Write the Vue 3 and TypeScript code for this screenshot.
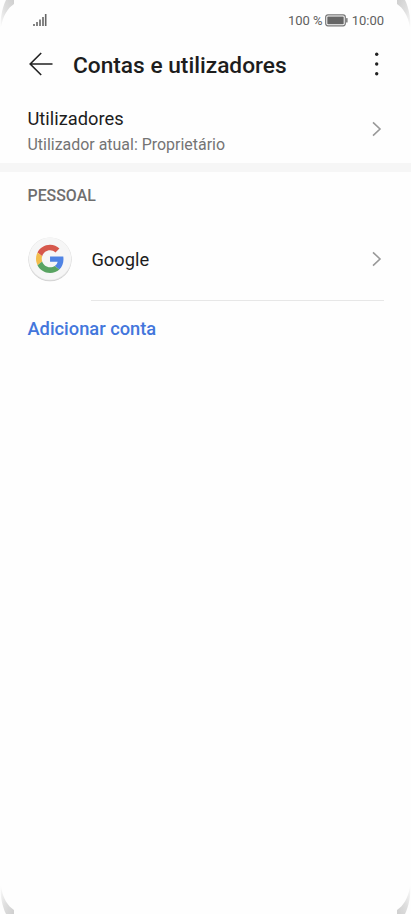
<script setup lang="ts">
interface Row {
  id: string
  title: string
  subtitle?: string
}

const users: Row = {
  id: 'users',
  title: 'Utilizadores',
  subtitle: 'Utilizador atual: Proprietário',
}
const account: Row = { id: 'google', title: 'Google' }
const corners: string[] = ['top-left', 'top-right', 'bottom-left', 'bottom-right']
</script>

<template>
  <main class="screen">
    <svg
      v-for="corner in corners"
      :key="corner"
      class="corner"
      :class="corner"
      viewBox="0 0 15 29"
      aria-hidden="true"
    >
      <defs>
        <linearGradient :id="'shade-' + corner" x1="1" y1="0" x2="0" y2="1">
          <stop offset="0" stop-color="#cfcfcf" />
          <stop offset="0.5" stop-color="#dfdfdf" />
          <stop offset="1" stop-color="#fbfbfb" />
        </linearGradient>
      </defs>
      <path d="M6 0H14V4C8 8 3 15 .8 28C0 18 2.500 7 6 0Z" :fill="`url(#shade-${corner})`" />
    </svg>

    <header class="status">
      <svg class="signal" viewBox="0 0 14 12" aria-hidden="true">
        <path d="M1 10V12M4 8V12M7 5.500V12M10 3V12M12.700 0V12" />
      </svg>
      <div class="status-right">
        <span class="percent">100 %</span>
        <svg class="battery" viewBox="0 0 24 13" aria-hidden="true">
          <rect class="shell" x=".7" y=".8" width="19.600" height="11" rx="2.200" />
          <rect class="charge" x="2.300" y="2.400" width="16.400" height="7.800" rx=".6" />
          <rect class="charge" x="21.200" y="4" width="1.300" height="4.600" rx=".6" />
        </svg>
        <span class="clock">10:00</span>
      </div>
    </header>

    <nav class="toolbar">
      <svg class="back" viewBox="0 0 24 24" aria-hidden="true">
        <path d="M12.200 1L1.200 12L12.200 23M1.200 12H23.500" />
      </svg>
      <h1 class="heading">Contas e utilizadores</h1>
      <svg class="more" viewBox="0 0 6 24" aria-hidden="true">
        <circle cx="2.700" cy="2.300" r="1.700" />
        <circle cx="2.700" cy="12" r="1.700" />
        <circle cx="2.700" cy="21.700" r="1.700" />
      </svg>
    </nav>

    <section class="users">
      <div class="labels">
        <span class="title">{{ users.title }}</span>
        <span class="subtitle">{{ users.subtitle }}</span>
      </div>
      <svg class="chevron" viewBox="0 0 10 16" aria-hidden="true">
        <path d="M1 1.300L8 8L1 14.700" />
      </svg>
    </section>

    <div class="band"></div>

    <h2 class="section">PESSOAL</h2>

    <section class="account">
      <svg class="google" viewBox="0 0 46 46" aria-hidden="true">
        <circle cx="23" cy="23.800" r="21.500" fill="#cfcfcf" />
        <circle cx="23" cy="23" r="21.600" fill="#e3e3e3" />
        <circle cx="23" cy="22.700" r="21.100" fill="#f6f6f6" />
        <g transform="translate(9 8.800) scale(.585)">
          <path fill="#d6584c" d="M24 9.500c3.540 0 6.710 1.220 9.210 3.600l6.850-6.850C35.900 2.380 30.470 0 24 0 14.620 0 6.510 5.380 2.560 13.220l7.980 6.190C12.430 13.720 17.740 9.500 24 9.500z" />
          <path fill="#4f83e4" d="M46.980 24.550c0-1.570-.15-3.090-.38-4.550H24v9.020h12.940c-.58 2.960-2.260 5.480-4.780 7.180l7.730 6c4.510-4.180 7.090-10.360 7.090-17.650z" />
          <path fill="#f3bd4c" d="M10.530 28.590c-.48-1.450-.76-2.990-.76-4.590s.27-3.140.76-4.590l-7.980-6.190C.92 16.460 0 20.120 0 24s.92 7.540 2.560 10.780l7.970-6.190z" />
          <path fill="#58a361" d="M24 48c6.480 0 11.930-2.130 15.890-5.810l-7.730-6c-2.150 1.450-4.920 2.300-8.160 2.300-6.260 0-11.570-4.220-13.470-9.910l-7.980 6.190C6.510 42.620 14.620 48 24 48z" />
        </g>
      </svg>
      <div class="account-body">
        <span class="title account-name">{{ account.title }}</span>
        <svg class="chevron" viewBox="0 0 10 16" aria-hidden="true">
          <path d="M1 1.300L8 8L1 14.700" />
        </svg>
      </div>
    </section>

    <a class="add">Adicionar conta</a>
  </main>
</template>

<style>
body {
  background: #fefefe;
}
</style>

<style scoped>
.screen {
  position: relative;
  box-sizing: border-box;
  width: 100%;
  height: 914px;
  overflow: hidden;
  background: #fefefe;
  color: #1d1d1d;
  font-family: Roboto, "Liberation Sans", sans-serif;
  display: flex;
  flex-direction: column;
}
svg {
  display: block;
  flex: none;
}
.corner {
  position: absolute;
  width: 15px;
  height: 29px;
}
.top-left { top: 0; left: 0; }
.top-right { top: 0; right: 0; transform: scaleX(-1); }
.bottom-left { bottom: 0; left: 0; transform: scaleY(-1); }
.bottom-right { bottom: 0; right: 0; transform: scale(-1); }
.status {
  height: 40px;
  padding: 0 27px 0 33px;
  display: flex;
  align-items: center;
  justify-content: space-between;
  box-sizing: border-box;
  color: #606060;
  font-size: 13px;
}
.signal {
  width: 14px;
  height: 12px;
  fill: none;
  stroke: #666;
  stroke-width: 1.6;
}
.status-right {
  display: flex;
  align-items: center;
}
.percent { margin-right: 2px; }
.battery {
  width: 24px;
  height: 13px;
  margin-right: 3px;
}
.shell {
  fill: none;
  stroke: #777;
  stroke-width: 1.2;
}
.charge { fill: #666; }
.toolbar {
  height: 48px;
  padding: 0 31px 0 29px;
  display: flex;
  align-items: center;
  box-sizing: border-box;
}
.back {
  width: 24px;
  height: 24px;
  fill: none;
  stroke: #222;
  stroke-width: 1.6;
}
.heading {
  flex: 1;
  margin: 0 0 0 20px;
  padding-top: 4px;
  font-size: 22.7px;
  line-height: 30px;
  font-weight: 500;
  white-space: nowrap;
}
.more {
  width: 6px;
  height: 24px;
  fill: #222;
}
.users {
  height: 75px;
  padding: 19px 29px 0 27.5px;
  display: flex;
  justify-content: space-between;
  box-sizing: border-box;
}
.labels {
  display: flex;
  flex-direction: column;
}
.title {
  font-size: 18.3px;
  line-height: 24px;
}
.subtitle {
  margin-top: 3px;
  color: #747474;
  font-size: 15.95px;
  line-height: 22px;
}
.chevron {
  width: 10px;
  height: 16px;
  fill: none;
  stroke: #999;
  stroke-width: 1.6;
}
.users .chevron { margin-top: 14px; }
.band {
  height: 9px;
  background: #f6f6f6;
}
.section {
  margin: 13px 27.5px 0;
  color: #6e6e6e;
  font-size: 15.9px;
  line-height: 22px;
  font-weight: 500;
}
.account {
  height: 94px;
  padding: 0 27px;
  display: flex;
  align-items: flex-start;
  box-sizing: border-box;
}
.google {
  width: 46px;
  height: 46px;
  margin-top: 29px;
}
.account-body {
  height: 94px;
  flex: 1;
  margin-left: 18.4px;
  padding: 11px 2px 0 0;
  display: flex;
  align-items: center;
  justify-content: space-between;
  border-bottom: 1px solid #e7e7e7;
  box-sizing: border-box;
}
.account-name { padding-top: 2px; }
.add {
  margin: 16px 27.5px 0;
  color: #4376dc;
  font-size: 18.3px;
  line-height: 24px;
  font-weight: 500;
}
</style>
